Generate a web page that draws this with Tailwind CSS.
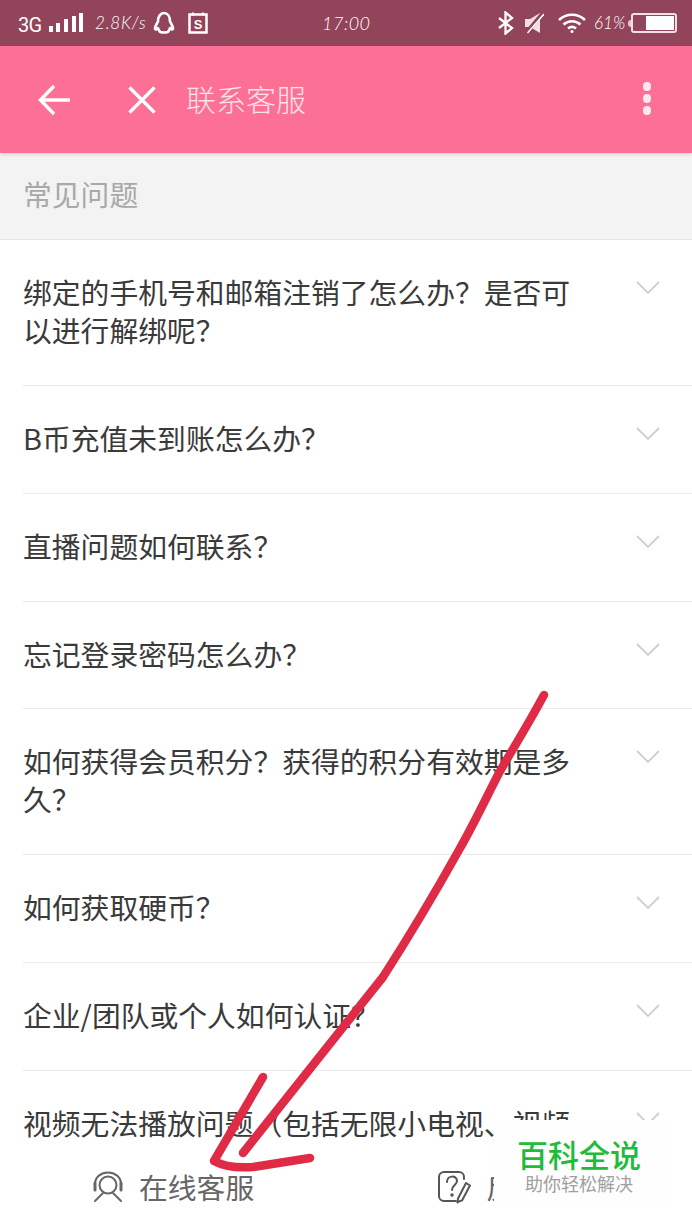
<!DOCTYPE html>
<html lang="zh-CN">
<head>
<meta charset="utf-8">
<script src="https://cdn.jsdelivr.net/npm/@tailwindcss/browser@4"></script>
</head>
<body class="bg-white">
<div class="relative w-[692px] h-[1230px] overflow-hidden flex flex-col bg-white font-['Noto_Sans_CJK_SC',sans-serif]">

  <!-- status bar -->
  <div class="h-[46px] shrink-0 bg-[#92445a] text-white flex items-center pl-[18px] pr-[15px]">
    <div class="w-[304px] shrink-0 flex items-center">
      <span class="text-[20px] leading-none w-[31px] font-['Roboto',sans-serif] tracking-[-0.8px] mt-[3px]">3G</span>
      <svg width="35" height="22" viewBox="0 0 35 22" class="mb-[1px]" fill="#fff"><rect x="0" y="14" width="4" height="6"/><rect x="7" y="11" width="4" height="9"/><rect x="15" y="7" width="4" height="13"/><rect x="23" y="4" width="4" height="16"/><rect x="30" y="1" width="4" height="19"/></svg>
      <span class="ml-[11px] w-[55px] text-[17px] italic font-light font-['Lato',sans-serif] tracking-[0.8px] whitespace-nowrap">2.8K/s</span>
      <svg width="24" height="24" viewBox="0 0 24 24" fill="none" stroke="#fff" stroke-width="2.600" stroke-linejoin="round" class="ml-[2px]"><path d="M6 10.500C6 5.500 8.500 2 12 2s6 3.500 6 8.500c1.500 2.500 3 5 3 7 0 1.500-1.500 1-3 -.5-.5 2-1.500 3-2 4-2 .5-6 .5-8 0-.5-1-1.500-2-2-4-1.500 1.500-3 2-3 .5 0-2 1.500-4.500 3-7z"/></svg>
      <svg width="20" height="22" viewBox="0 0 20 22" fill="none" class="ml-[12px]"><path d="M1.500 2.500h17v18h-17z" stroke="#fff" stroke-width="2.500"/><path d="M5 .5v3M15 .5v3" stroke="#fff" stroke-width="2"/><text x="10" y="16.500" font-size="13" font-weight="700" text-anchor="middle" fill="#fff" font-family="Liberation Sans">S</text></svg>
    </div>
    <span class="text-[18px] italic font-light font-['Lato',sans-serif] tracking-[0.5px]">17:00</span>
    <div class="ml-auto flex items-center">
      <svg width="16" height="24" viewBox="0 0 16 24" fill="none" stroke="#fff" stroke-width="2.300"><path d="M1 7l13 10-6.500 5.500V1.500L14 7 1 17"/></svg>
      <svg width="20" height="22" viewBox="0 0 20 22" class="ml-[10px]" fill="none"><path d="M1 7h5l10-6v20L6 15H1z" fill="#f0dfe4"/><path d="M2 21L19 1" stroke="#92445a" stroke-width="4"/><path d="M3.500 21L20 2" stroke="#fff" stroke-width="1.500"/></svg>
      <svg width="30" height="22" viewBox="0 0 30 22" class="ml-[13px]" fill="none" stroke="#fff" stroke-width="2.500"><path d="M2 8c7-7 19-7 26 0M6.500 12.500c5-4.500 12-4.500 17 0M11 16.500c2.500-2 5.500-2 8 0"/><circle cx="15" cy="19.500" r="1.500" fill="#fff" stroke="none"/></svg>
      <span class="ml-[7px] w-[33px] text-[17px] italic font-light font-['Lato',sans-serif]">61%</span>
      <div class="ml-[1px] flex items-center">
        <div class="w-[3px] h-[7px] bg-white/70 rounded-l-sm"></div>
        <div class="w-[46px] h-[20px] border-2 border-[#f3dfe5] rounded-[3px] flex justify-end p-[1px]"><div class="w-[28px] bg-white"></div></div>
      </div>
    </div>
  </div>

  <!-- app header -->
  <div class="h-[107px] shrink-0 bg-[#fd7095] flex items-center shadow-[0_1px_3px_rgba(0,0,0,0.25)] relative">
    <svg width="34" height="34" viewBox="0 0 34 34" fill="none" stroke="#fff" stroke-width="3.400" class="ml-[37px]"><path d="M33 17H4M17 3L3.500 17 17 31"/></svg>
    <svg width="30" height="30" viewBox="0 0 30 30" fill="none" stroke="#fff" stroke-width="3.400" class="ml-[56px]"><path d="M2.500 2.500l25 25M27.500 2.500l-25 25"/></svg>
    <span class="ml-[29px] text-[30px] font-extralight text-[#fde3ea] leading-none mb-[3px]">联系客服</span>
    <div class="ml-auto mr-[41px] flex flex-col gap-[3.500px] mb-[2px]">
      <div class="size-[8.500px] rounded-full bg-[#ffe9ef]"></div>
      <div class="size-[8.500px] rounded-full bg-[#ffe9ef]"></div>
      <div class="size-[8.500px] rounded-full bg-[#ffe9ef]"></div>
    </div>
  </div>

  <!-- section title -->
  <div class="mt-[2px] h-[85px] shrink-0 bg-[#f3f3f3] border-b border-[#e4e4e4] flex items-center pl-[23px] pb-[6px] text-[28.800px] text-[#a9a9a9]">常见问题</div>

  <!-- list -->
  <div class="flex-1 min-h-0 overflow-hidden pl-[23px] text-[28.800px] leading-[38px] text-[#3a3a3a]">
    <div class="flex items-start pt-[33px] pb-[36px] border-b border-[#ebebeb]">
      <div class="w-[552px] shrink-0">绑定的手机号和邮箱注销了怎么办&#xFF1F;是否可以进行解绑呢&#xFF1F;</div>
      <svg width="24" height="14" viewBox="0 0 24 14" fill="none" stroke="#cfcfcf" stroke-width="1.800" class="ml-[61px] mt-[8px]"><path d="M1 1l11 11L23 1"/></svg>
    </div>
    <div class="flex items-start pt-[33px] pb-[36px] border-b border-[#ebebeb]">
      <div class="w-[552px] shrink-0">B币充值未到账怎么办&#xFF1F;</div>
      <svg width="24" height="14" viewBox="0 0 24 14" fill="none" stroke="#cfcfcf" stroke-width="1.800" class="ml-[61px] mt-[8px]"><path d="M1 1l11 11L23 1"/></svg>
    </div>
    <div class="flex items-start pt-[33px] pb-[36px] border-b border-[#ebebeb]">
      <div class="w-[552px] shrink-0">直播问题如何联系&#xFF1F;</div>
      <svg width="24" height="14" viewBox="0 0 24 14" fill="none" stroke="#cfcfcf" stroke-width="1.800" class="ml-[61px] mt-[8px]"><path d="M1 1l11 11L23 1"/></svg>
    </div>
    <div class="flex items-start pt-[33px] pb-[35px] border-b border-[#ebebeb]">
      <div class="w-[552px] shrink-0">忘记登录密码怎么办&#xFF1F;</div>
      <svg width="24" height="14" viewBox="0 0 24 14" fill="none" stroke="#cfcfcf" stroke-width="1.800" class="ml-[61px] mt-[8px]"><path d="M1 1l11 11L23 1"/></svg>
    </div>
    <div class="flex items-start pt-[33px] pb-[36px] border-b border-[#ebebeb]">
      <div class="w-[552px] shrink-0">如何获得会员积分&#xFF1F;获得的积分有效期是多久&#xFF1F;</div>
      <svg width="24" height="14" viewBox="0 0 24 14" fill="none" stroke="#cfcfcf" stroke-width="1.800" class="ml-[61px] mt-[8px]"><path d="M1 1l11 11L23 1"/></svg>
    </div>
    <div class="flex items-start pt-[33px] pb-[36px] border-b border-[#ebebeb]">
      <div class="w-[552px] shrink-0">如何获取硬币&#xFF1F;</div>
      <svg width="24" height="14" viewBox="0 0 24 14" fill="none" stroke="#cfcfcf" stroke-width="1.800" class="ml-[61px] mt-[8px]"><path d="M1 1l11 11L23 1"/></svg>
    </div>
    <div class="flex items-start pt-[33px] pb-[36px] border-b border-[#ebebeb]">
      <div class="w-[552px] shrink-0">企业/团队或个人如何认证&#xFF1F;</div>
      <svg width="24" height="14" viewBox="0 0 24 14" fill="none" stroke="#cfcfcf" stroke-width="1.800" class="ml-[61px] mt-[8px]"><path d="M1 1l11 11L23 1"/></svg>
    </div>
    <div class="flex items-start pt-[33px]">
      <div class="w-[552px] shrink-0">视频无法播放问题&#xFF08;包括无限小电视&#x3001;视频</div>
      <svg width="24" height="14" viewBox="0 0 24 14" fill="none" stroke="#cfcfcf" stroke-width="1.800" class="ml-[61px] mt-[8px]"><path d="M1 1l11 11L23 1"/></svg>
    </div>
  </div>

  <!-- bottom bar -->
  <div class="h-[86px] shrink-0 bg-white grid grid-cols-2 text-[28.800px] text-[#666]">
    <div class="flex items-center pl-[92px]">
      <svg width="32" height="32" viewBox="0 0 32 32" fill="none" stroke="#666" stroke-width="2" stroke-linecap="round"><circle cx="16" cy="14" r="8.500"/><path d="M3 16v-3C3 6 9 1.500 16 1.500S29 6 29 13v3"/><path d="M3 12v7M29 12v7" stroke-width="3"/><path d="M11 22L3 30M21 22l8 8"/></svg>
      <span class="ml-[15px]">在线客服</span>
    </div>
    <div class="flex items-center pl-[91px]">
      <svg width="34" height="34" viewBox="0 0 34 34" fill="none" stroke="#555" stroke-width="2" stroke-linecap="round" stroke-linejoin="round"><path d="M19 31H7a5 5 0 0 1-5-5V7a5 5 0 0 1 5-5h15a5 5 0 0 1 5 5v2"/><path d="M10 12c0-7 10-7 10-1 0 4-5 4-5 9"/><circle cx="15" cy="25" r=".8"/><path d="M23 31l-2.500 1.500.5-4L29 13l4 2.500-8 15z"/></svg>
      <span class="ml-[15px]">反馈</span>
    </div>
  </div>

  <!-- watermark -->
  <div class="absolute left-[494px] top-[1120px] w-[174px] h-[85px] bg-[#fefefe] flex flex-col items-center pt-[17px] pr-[4px]">
    <span class="text-[31px] leading-[34px] font-medium text-[#1fbb3a]">百科全说</span>
    <span class="text-[18px] leading-[24px] text-[#a0a0a0]">助你轻松解决</span>
  </div>

  <!-- hand-drawn arrow -->
  <svg class="absolute left-0 top-0 pointer-events-none" width="692" height="1230" viewBox="0 0 692 1230" fill="none" stroke="#e02b46" stroke-width="8.500" stroke-linecap="round" stroke-linejoin="round">
    <path d="M544 695C525 730 512 750 499 773C485 800 475 822 459 850C435 893 410 935 383 977L243 1153"/>
    <path d="M263 1077L214 1161C225 1167 240 1168 253 1167L310 1158"/>
  </svg>
</div>
</body>
</html>
